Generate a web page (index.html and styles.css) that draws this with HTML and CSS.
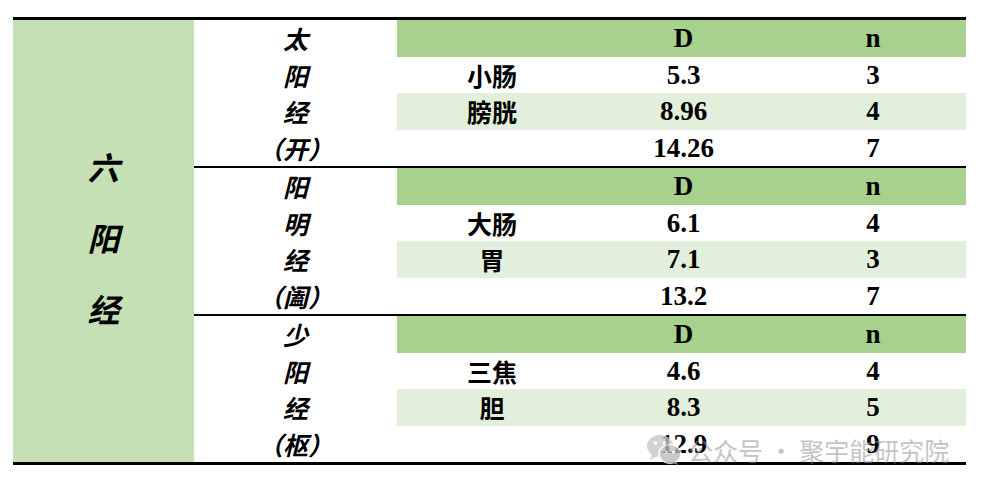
FILE: index.html
```html
<!DOCTYPE html>
<html lang="zh">
<head>
<meta charset="utf-8">
<link rel="stylesheet" href="styles.css">
</head>
<body>
<div class="table">
  <div class="side">
    <div>六</div>
    <div>阳</div>
    <div>经</div>
  </div>
  <div class="groups">
    <div class="group">
      <div class="meridian"><div>太</div><div>阳</div><div>经</div><div>（开）</div></div>
      <div class="rows">
        <div class="row head"><span></span><span class="num">D</span><span class="num">n</span></div>
        <div class="row"><span class="organ">小肠</span><span class="num">5.3</span><span class="num">3</span></div>
        <div class="row light"><span class="organ">膀胱</span><span class="num">8.96</span><span class="num">4</span></div>
        <div class="row"><span></span><span class="num">14.26</span><span class="num">7</span></div>
      </div>
    </div>
    <div class="group sep">
      <div class="meridian"><div>阳</div><div>明</div><div>经</div><div>（阖）</div></div>
      <div class="rows">
        <div class="row head"><span></span><span class="num">D</span><span class="num">n</span></div>
        <div class="row"><span class="organ">大肠</span><span class="num">6.1</span><span class="num">4</span></div>
        <div class="row light"><span class="organ">胃</span><span class="num">7.1</span><span class="num">3</span></div>
        <div class="row"><span></span><span class="num">13.2</span><span class="num">7</span></div>
      </div>
    </div>
    <div class="group sep">
      <div class="meridian"><div>少</div><div>阳</div><div>经</div><div>（枢）</div></div>
      <div class="rows">
        <div class="row head"><span></span><span class="num">D</span><span class="num">n</span></div>
        <div class="row"><span class="organ">三焦</span><span class="num">4.6</span><span class="num">4</span></div>
        <div class="row light"><span class="organ">胆</span><span class="num">8.3</span><span class="num">5</span></div>
        <div class="row"><span></span><span class="num">12.9</span><span class="num">9</span></div>
      </div>
    </div>
  </div>
  <div class="watermark">
    <svg class="wx" width="36" height="32" viewBox="0 0 36 32">
      <ellipse cx="14" cy="12" rx="13" ry="11" fill="#c8c8c8"/>
      <path d="M6 20 L4 26 L11 22 Z" fill="#c8c8c8"/>
      <circle cx="9.5" cy="9" r="1.8" fill="#fff"/>
      <circle cx="18.5" cy="9" r="1.8" fill="#fff"/>
      <ellipse cx="24" cy="20" rx="11" ry="9.5" fill="#bcbcbc" stroke="#fff" stroke-width="1.5"/>
      <path d="M30 27 L32 31 L26 28.5 Z" fill="#bcbcbc"/>
      <circle cx="20.5" cy="18" r="1.5" fill="#fff"/>
      <circle cx="27.5" cy="18" r="1.5" fill="#fff"/>
    </svg>
    <span class="wm-text">公众号 · 聚宇能研究院</span>
  </div>
</div>
</body>
</html>
```

FILE: styles.css
```css
html, body {
  margin: 0;
  padding: 0;
  background: #ffffff;
}

.table {
  position: relative;
  margin: 17px 0 0 13px;
  width: 953px;
  display: flex;
  border-top: 3px solid #000;
  border-bottom: 3px solid #000;
}

.side {
  width: 181px;
  background: #c5e0b4;
  display: flex;
  flex-direction: column;
  align-items: center;
  justify-content: center;
  padding-bottom: 8px;
  box-sizing: border-box;
  font-family: "Noto Sans CJK SC", "DejaVu Sans", sans-serif;
  font-style: italic;
  font-weight: 700;
  font-size: 32px;
  line-height: 71px;
  color: #000;
}

.groups {
  width: 772px;
  display: flex;
  flex-direction: column;
}

.group {
  display: flex;
}

.group.sep {
  border-top: 2px solid #000;
}

.meridian {
  width: 203px;
  display: flex;
  flex-direction: column;
  font-family: "Noto Sans CJK SC", "DejaVu Sans", sans-serif;
  font-style: italic;
  font-weight: 700;
  font-size: 25px;
  color: #000;
}

.meridian div {
  height: 36.5px;
  line-height: 36.5px;
  text-align: center;
}

.rows {
  width: 569px;
  display: flex;
  flex-direction: column;
}

.row {
  height: 36.5px;
  display: grid;
  grid-template-columns: 190px 193px 186px;
  align-items: center;
  text-align: center;
}

.row.head {
  background: #a9d18e;
}

.row.light {
  background: #e2efda;
}

.organ {
  font-family: "Noto Sans CJK SC", "DejaVu Sans", sans-serif;
  font-weight: 700;
  font-size: 25px;
  line-height: 36px;
}

.num {
  font-family: "Liberation Serif", "Times New Roman", serif;
  font-weight: 700;
  font-size: 27px;
  line-height: 36px;
}

.watermark {
  position: absolute;
  left: 633px;
  top: 412px;
  display: flex;
  align-items: center;
  gap: 6px;
  opacity: 0.8;
}

.wx {
  display: block;
}

.wm-text {
  font-family: "Noto Sans CJK SC", "DejaVu Sans", sans-serif;
  font-size: 25px;
  color: rgba(150, 150, 150, 0.7);
  white-space: nowrap;
}
```
